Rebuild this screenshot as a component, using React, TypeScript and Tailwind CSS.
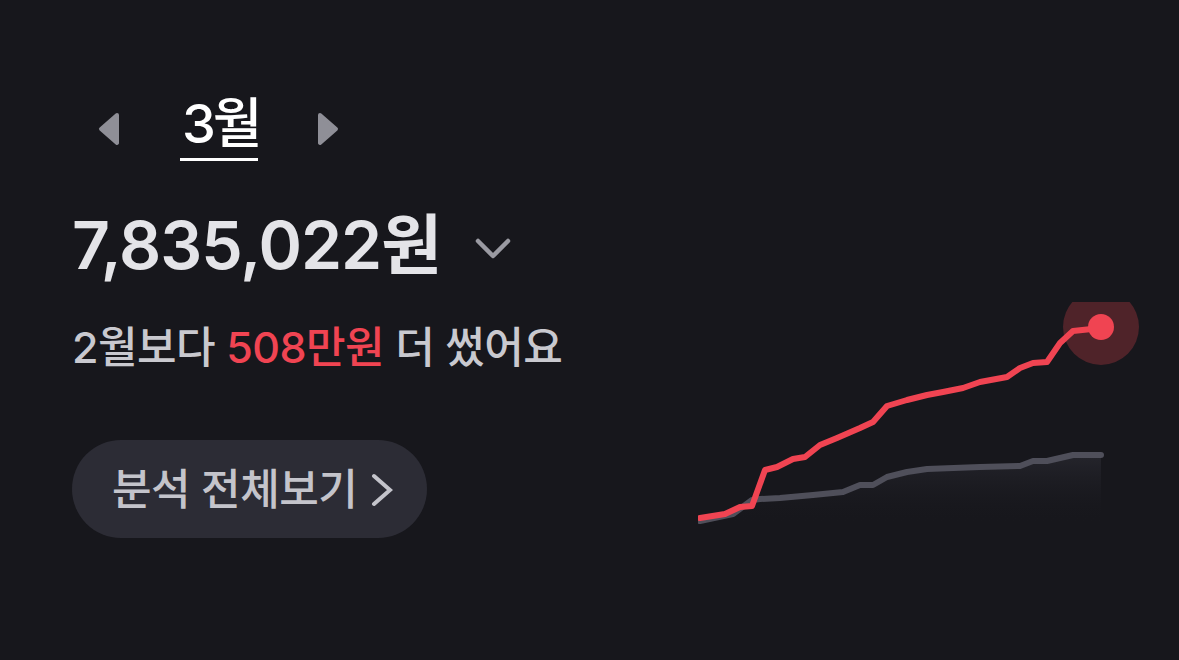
import React from 'react';

const RED = [
  [2, 216], [27, 212], [42, 205], [54, 204], [67, 168], [79, 165], [95, 157], [107, 155],
  [122, 143], [139, 136], [162, 126], [175, 120], [189, 104], [209, 98], [229, 93], [245, 90],
  [265, 86], [282, 80], [309, 75], [322, 66], [335, 61], [349, 60], [362, 41], [375, 29], [403, 26],
];

const GRAY = [
  [2, 219], [35, 212], [54, 198], [62, 197], [82, 196], [115, 193], [145, 190], [162, 183],
  [175, 183], [189, 175], [209, 170], [229, 167], [282, 165], [322, 164], [335, 159], [349, 159],
  [362, 156], [375, 153], [403, 153],
];

const toPath = (pts: number[][]) => pts.map((p, i) => `${i ? 'L' : 'M'}${p[0]} ${p[1]}`).join(' ');

function Triangle({ dir }: { dir: 'left' | 'right' }) {
  const d = dir === 'left' ? 'M19 3 L3 17 L19 31 Z' : 'M3 3 L19 17 L3 31 Z';
  return (
    <svg width="22" height="34" viewBox="0 0 22 34">
      <path d={d} fill="#8f8f97" stroke="#8f8f97" strokeWidth="4" strokeLinejoin="round" />
    </svg>
  );
}

function TrendChart() {
  const grayPath = toPath(GRAY);
  return (
    <svg width="441" height="225" viewBox="0 0 441 225" className="ml-auto mr-[40px] mt-[302px] shrink-0">
      <defs>
        <linearGradient id="grayFill" x1="0" y1="0" x2="0" y2="1">
          <stop offset="0%" stopColor="#2b2b33" stopOpacity="0.7" />
          <stop offset="100%" stopColor="#17171c" stopOpacity="0" />
        </linearGradient>
      </defs>
      <path d={`${grayPath} L403 222 L2 222 Z`} fill="url(#grayFill)" />
      <path d={grayPath} fill="none" stroke="#4f4f5a" strokeWidth="6" strokeLinejoin="round" strokeLinecap="round" />
      <path d={toPath(RED)} fill="none" stroke="#f04452" strokeWidth="6" strokeLinejoin="round" strokeLinecap="round" />
      <circle cx="403" cy="25" r="38" fill="#f04452" fillOpacity="0.26" />
      <circle cx="403" cy="25" r="13" fill="#f04452" />
    </svg>
  );
}

export default function App() {
  return (
    <div className="w-full h-[660px] bg-[#17171c] flex overflow-hidden font-[Inter,'Noto_Sans_CJK_KR',sans-serif]">
      <div className="flex flex-col pl-[72px] pt-[96px] shrink-0">
        <div className="flex items-center h-[66px]">
          <div className="ml-[26px]">
            <Triangle dir="left" />
          </div>
          <div className="ml-[60px] w-[78px] flex flex-col">
            <span className="text-[54px] leading-none font-medium text-white pl-[2px] whitespace-nowrap tracking-[-3px]">3월</span>
            <div className="h-[3px] bg-white mt-[7px]" />
          </div>
          <div className="ml-[59px]">
            <Triangle dir="right" />
          </div>
        </div>

        <div className="flex items-center mt-[50px]">
          <span className="text-[66px] leading-none font-semibold text-[#e4e4e8] tracking-[-1px]">7,835,022원</span>
          <svg width="36" height="22" viewBox="0 0 36 22" className="ml-[34px] mt-[8px]">
            <path d="M3 3 L18 18 L33 3" fill="none" stroke="#9a9aa2" strokeWidth="4.5" strokeLinecap="round" strokeLinejoin="round" />
          </svg>
        </div>

        <div className="mt-[48px] text-[43px] leading-none font-medium text-[#c9c9cf] tracking-[-0.5px]">
          2월보다 <span className="text-[#f04452]">508만원</span> 더 썼어요
        </div>

        <button className="mt-[71px] self-start h-[98px] pl-[40px] pr-[34px] rounded-full bg-[#2c2c35] flex items-center gap-[14px]">
          <span className="text-[43px] leading-none font-medium text-[#c4c4cb] tracking-[-0.5px]">분석 전체보기</span>
          <svg width="22" height="34" viewBox="0 0 22 34" className="mt-[2px]">
            <path d="M3 3 L19 17 L3 31" fill="none" stroke="#c4c4cb" strokeWidth="4" strokeLinecap="round" strokeLinejoin="miter" />
          </svg>
        </button>
      </div>
      <TrendChart />
    </div>
  );
}
